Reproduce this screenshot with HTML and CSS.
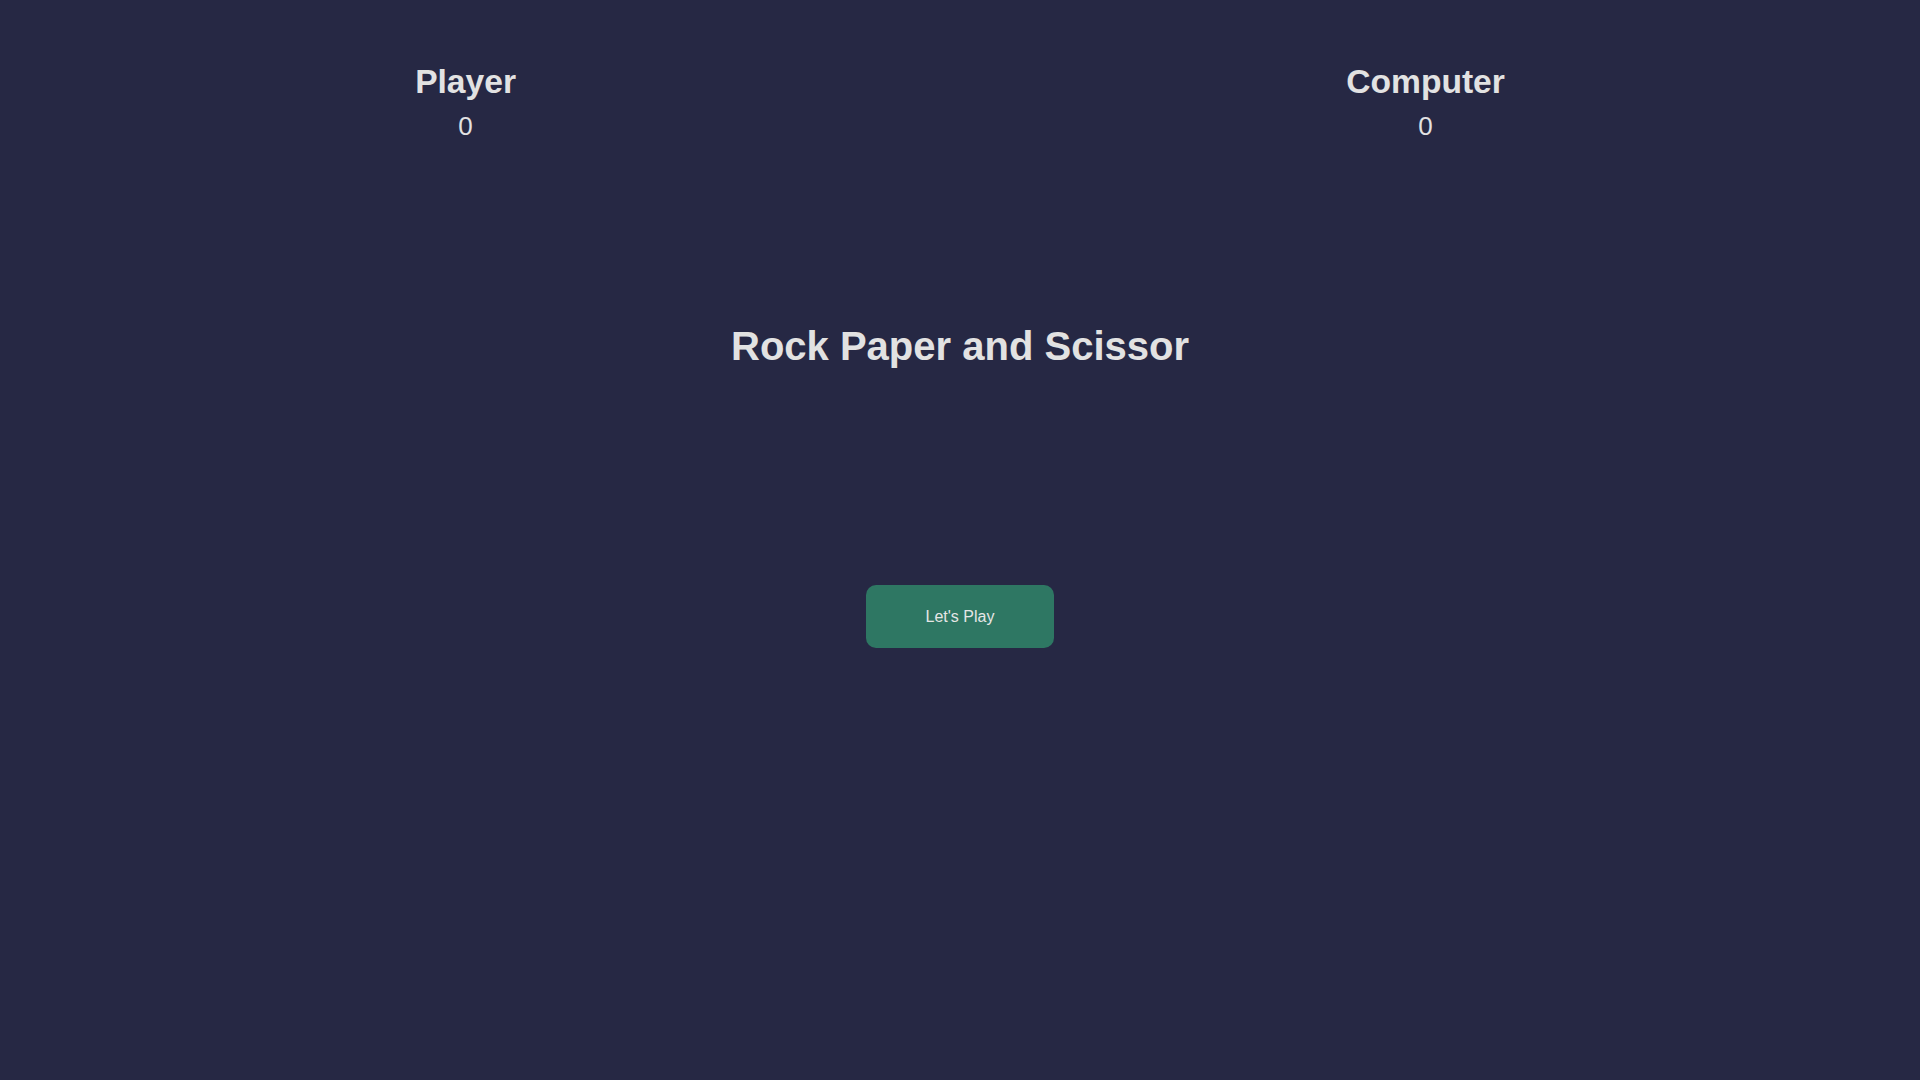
FILE: index.html
```html
<!DOCTYPE html>
<html lang="en">
<head>
<meta charset="UTF-8">
<title>Rock Paper and Scissor</title>
<link rel="stylesheet" href="styles.css">
</head>
<body>
  <div class="scoreboard">
    <div class="score-card">
      <h2 class="score-name">Player</h2>
      <p class="score-value">0</p>
    </div>
    <div class="score-card">
      <h2 class="score-name">Computer</h2>
      <p class="score-value">0</p>
    </div>
  </div>
  <h1 class="title">Rock Paper and Scissor</h1>
  <div class="actions">
    <button class="play-btn">Let's Play</button>
  </div>
</body>
</html>
```

FILE: styles.css
```css
html, body {
  margin: 0;
  padding: 0;
  height: 100%;
}
body {
  background: #262844;
  color: #e2e2e2;
  font-family: "Liberation Sans", Arial, sans-serif;
}
.scoreboard {
  display: flex;
  justify-content: space-around;
  padding-top: 63px;
}
.score-card {
  display: flex;
  flex-direction: column;
  align-items: center;
}
.score-name {
  margin: 0;
  font-size: 33.6px;
  font-weight: bold;
}
.score-value {
  margin: 10px 0 0;
  font-size: 26px;
}
.title {
  margin: 182px 0 0;
  text-align: center;
  font-size: 40px;
  font-weight: bold;
}
.actions {
  display: flex;
  justify-content: center;
  margin-top: 216px;
}
.play-btn {
  width: 188px;
  height: 63px;
  border: none;
  border-radius: 10px;
  background: #2e7763;
  color: #e6e6e6;
  font-family: "Liberation Sans", Arial, sans-serif;
  font-size: 16px;
  cursor: pointer;
}
```
